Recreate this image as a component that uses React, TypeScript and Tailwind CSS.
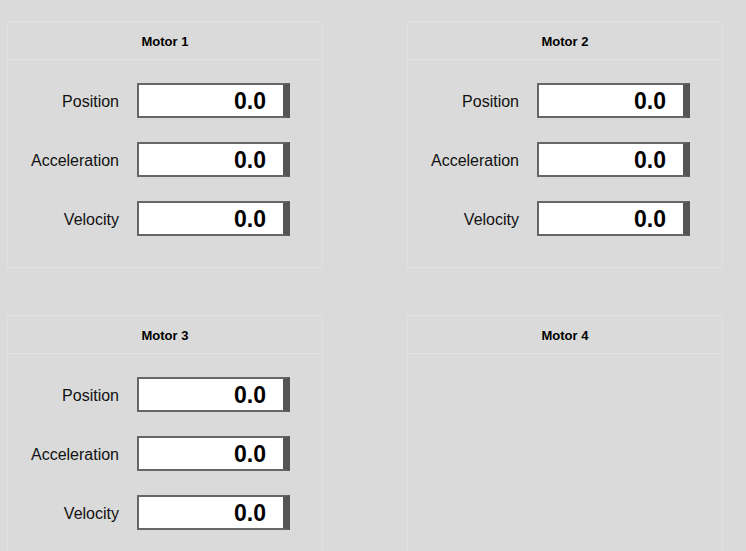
const motors = [
  { name: 'Motor 1', fields: ['Position', 'Acceleration', 'Velocity'] },
  { name: 'Motor 2', fields: ['Position', 'Acceleration', 'Velocity'] },
  { name: 'Motor 3', fields: ['Position', 'Acceleration', 'Velocity'] },
  { name: 'Motor 4', fields: [] as string[] },
];

function ValueBox({ value }: { value: string }) {
  return (
    <div className="w-[153px] h-[35px] flex items-center justify-end bg-white border-2 border-[#666] border-r-[7px] border-r-[#555] pr-[17px] pt-px text-[23px] font-bold text-black leading-none">
      {value}
    </div>
  );
}

function MotorCard({ name, fields }: { name: string; fields: string[] }) {
  return (
    <div className="w-[316px] h-[247px] border border-[#e1e1e1]">
      <div className="h-[38px] flex items-center justify-center pt-[2px] border-b border-[#e1e1e1] text-[13px] font-bold text-black">
        {name}
      </div>
      <div className="pt-[23px] flex flex-col gap-[24px]">
        {fields.map((f) => (
          <div key={f} className="flex items-center gap-[18px]">
            <span className="w-[111px] text-right text-[16px] text-[#111] pt-[2px]">{f}</span>
            <ValueBox value="0.0" />
          </div>
        ))}
      </div>
    </div>
  );
}

export default function App() {
  return (
    <div
      className="min-h-screen bg-[#dadada] pt-[21px] pl-[7px] overflow-hidden"
      style={{ fontFamily: '"Liberation Sans", Arial, sans-serif' }}
    >
      <div className="grid grid-cols-[316px_316px] gap-x-[84px] gap-y-[47px]">
        {motors.map((m) => (
          <MotorCard key={m.name} name={m.name} fields={m.fields} />
        ))}
      </div>
    </div>
  );
}
